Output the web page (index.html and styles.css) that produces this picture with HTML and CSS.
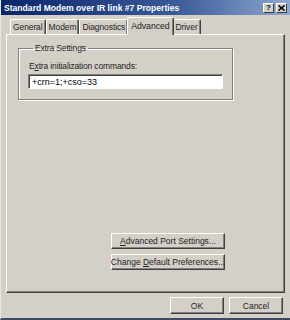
FILE: index.html
```html
<!DOCTYPE html>
<html lang="en">
<head>
    <meta charset="UTF-8">
    <title>Standard Modem over IR link #7 Properties</title>
    <link rel="stylesheet" href="styles.css">
</head>
<body>
    <div class="window">
        <!-- Title bar -->
        <div class="titlebar">
            <span class="title">Standard Modem over IR link #7 Properties</span>
            <div class="title-btns">
                <span class="tbtn help">?</span>
                <span class="tbtn close">
                    <svg width="7" height="6" viewBox="0 0 7 6"><path d="M0.5 0.5 L6.5 5.5 M6.5 0.5 L0.5 5.5" stroke="#000" stroke-width="1.6"/></svg>
                </span>
            </div>
        </div>

        <div class="dialog">
            <!-- Tabs -->
            <div class="tabs">
                <div class="tab">General</div>
                <div class="tab">Modem</div>
                <div class="tab">Diagnostics</div>
                <div class="tab active">Advanced</div>
                <div class="tab">Driver</div>
            </div>

            <div class="panel">
                <fieldset class="group">
                    <legend>Extra Settings</legend>
                    <label class="field-label">E<u>x</u>tra initialization commands:</label>
                    <div class="textbox">+crn=1;+cso=33</div>
                </fieldset>

                <div class="panel-btns">
                    <div class="btn wide"><span><u>A</u>dvanced Port Settings...</span></div>
                    <div class="btn wide"><span>Change <u>D</u>efault Preferences...</span></div>
                </div>
            </div>

            <div class="footer">
                <div class="btn small">OK</div>
                <div class="btn small">Cancel</div>
            </div>
        </div>
    </div>
</body>
</html>
```

FILE: styles.css
```css
* {
    margin: 0;
    padding: 0;
    box-sizing: border-box;
}

body {
    font-family: 'Liberation Sans', Arial, sans-serif;
    font-size: 8px;
    background: #d4d0c8;
    color: #000;
}

.window {
    width: 290px;
    height: 320px;
    background: #d4d0c8;
    border-left: 1px solid #e8e6e2;
    border-bottom: 2px solid #3c4a66;
    display: flex;
    flex-direction: column;
}

.titlebar {
    height: 15px;
    background: linear-gradient(to right, #0a246a 0%, #3a5a98 60%, #8ea8d0 100%);
    display: flex;
    align-items: center;
    justify-content: space-between;
    padding: 0 3px 0 3px;
}

.title {
    color: #fff;
    font-weight: bold;
    font-size: 8.6px;
}

.title-btns {
    display: flex;
    gap: 2px;
}

.tbtn {
    width: 11px;
    height: 10px;
    background: #d4d0c8;
    border: 1px solid;
    border-color: #fff #404040 #404040 #fff;
    display: flex;
    align-items: center;
    justify-content: center;
    font-weight: bold;
    font-size: 8px;
    line-height: 1;
}

.dialog {
    flex: 1;
    display: flex;
    flex-direction: column;
    padding: 2px 5px 0 5px;
}

.tabs {
    display: flex;
    align-items: flex-end;
    height: 17px;
    padding-left: 4px;
}

.tab {
    height: 15px;
    padding: 0 2px;
    display: flex;
    align-items: center;
    white-space: nowrap;
    border: 1px solid;
    border-color: #fff #404040 transparent #fff;
    border-bottom: none;
    border-radius: 2px 2px 0 0;
    box-shadow: inset -1px 0 #808080;
    font-size: 8.5px;
    letter-spacing: -0.1px;
    color: #222;
}

.tab.active {
    padding: 0 3px 2px 3px;
    margin: 0 -1px -1px -1px;
    position: relative;
    z-index: 1;
    background: #d4d0c8;
    height: 18px;
    font-size: 8.8px;
}

.panel {
    height: 259px;
    border: 1px solid;
    border-color: #fff #404040 #404040 #fff;
    box-shadow: inset -1px -1px #808080;
    display: flex;
    flex-direction: column;
    padding: 8px 51px 22px 11px;
}

.group {
    border: 1px solid #808080;
    box-shadow: 1px 1px 0 #fff, inset 1px 1px 0 #fff;
    height: 57px;
    padding: 5px 9px 0 10px;
}

.group legend {
    padding: 0 2px;
    margin-left: 4px;
    font-size: 8.5px;
    letter-spacing: -0.15px;
    color: #222;
}

.field-label {
    display: block;
    font-size: 8.5px;
    letter-spacing: -0.15px;
    color: #222;
    margin-top: 3px;
    margin-bottom: 3px;
}

.textbox {
    height: 15px;
    background: #fff;
    border: 1px solid;
    border-color: #808080 #fff #fff #808080;
    box-shadow: inset 1px 1px #404040;
    padding: 1px 3px;
    font-size: 9px;
    line-height: 12px;
    margin-left: -1px;
}

.panel-btns {
    margin-top: auto;
    margin-left: 93px;
    display: flex;
    flex-direction: column;
    gap: 5px;
}

.btn {
    height: 16px;
    background: #d4d0c8;
    border: 1px solid;
    border-color: #fff #404040 #404040 #fff;
    box-shadow: inset -1px -1px #808080;
    display: flex;
    align-items: center;
    justify-content: center;
    white-space: nowrap;
    font-size: 8.5px;
    color: #222;
}

.btn.wide {
    width: 114px;
}

.footer {
    display: flex;
    justify-content: flex-end;
    gap: 5px;
    padding: 4px 2px 0 0;
}

.btn.small {
    width: 54px;
    height: 17px;
}
```
